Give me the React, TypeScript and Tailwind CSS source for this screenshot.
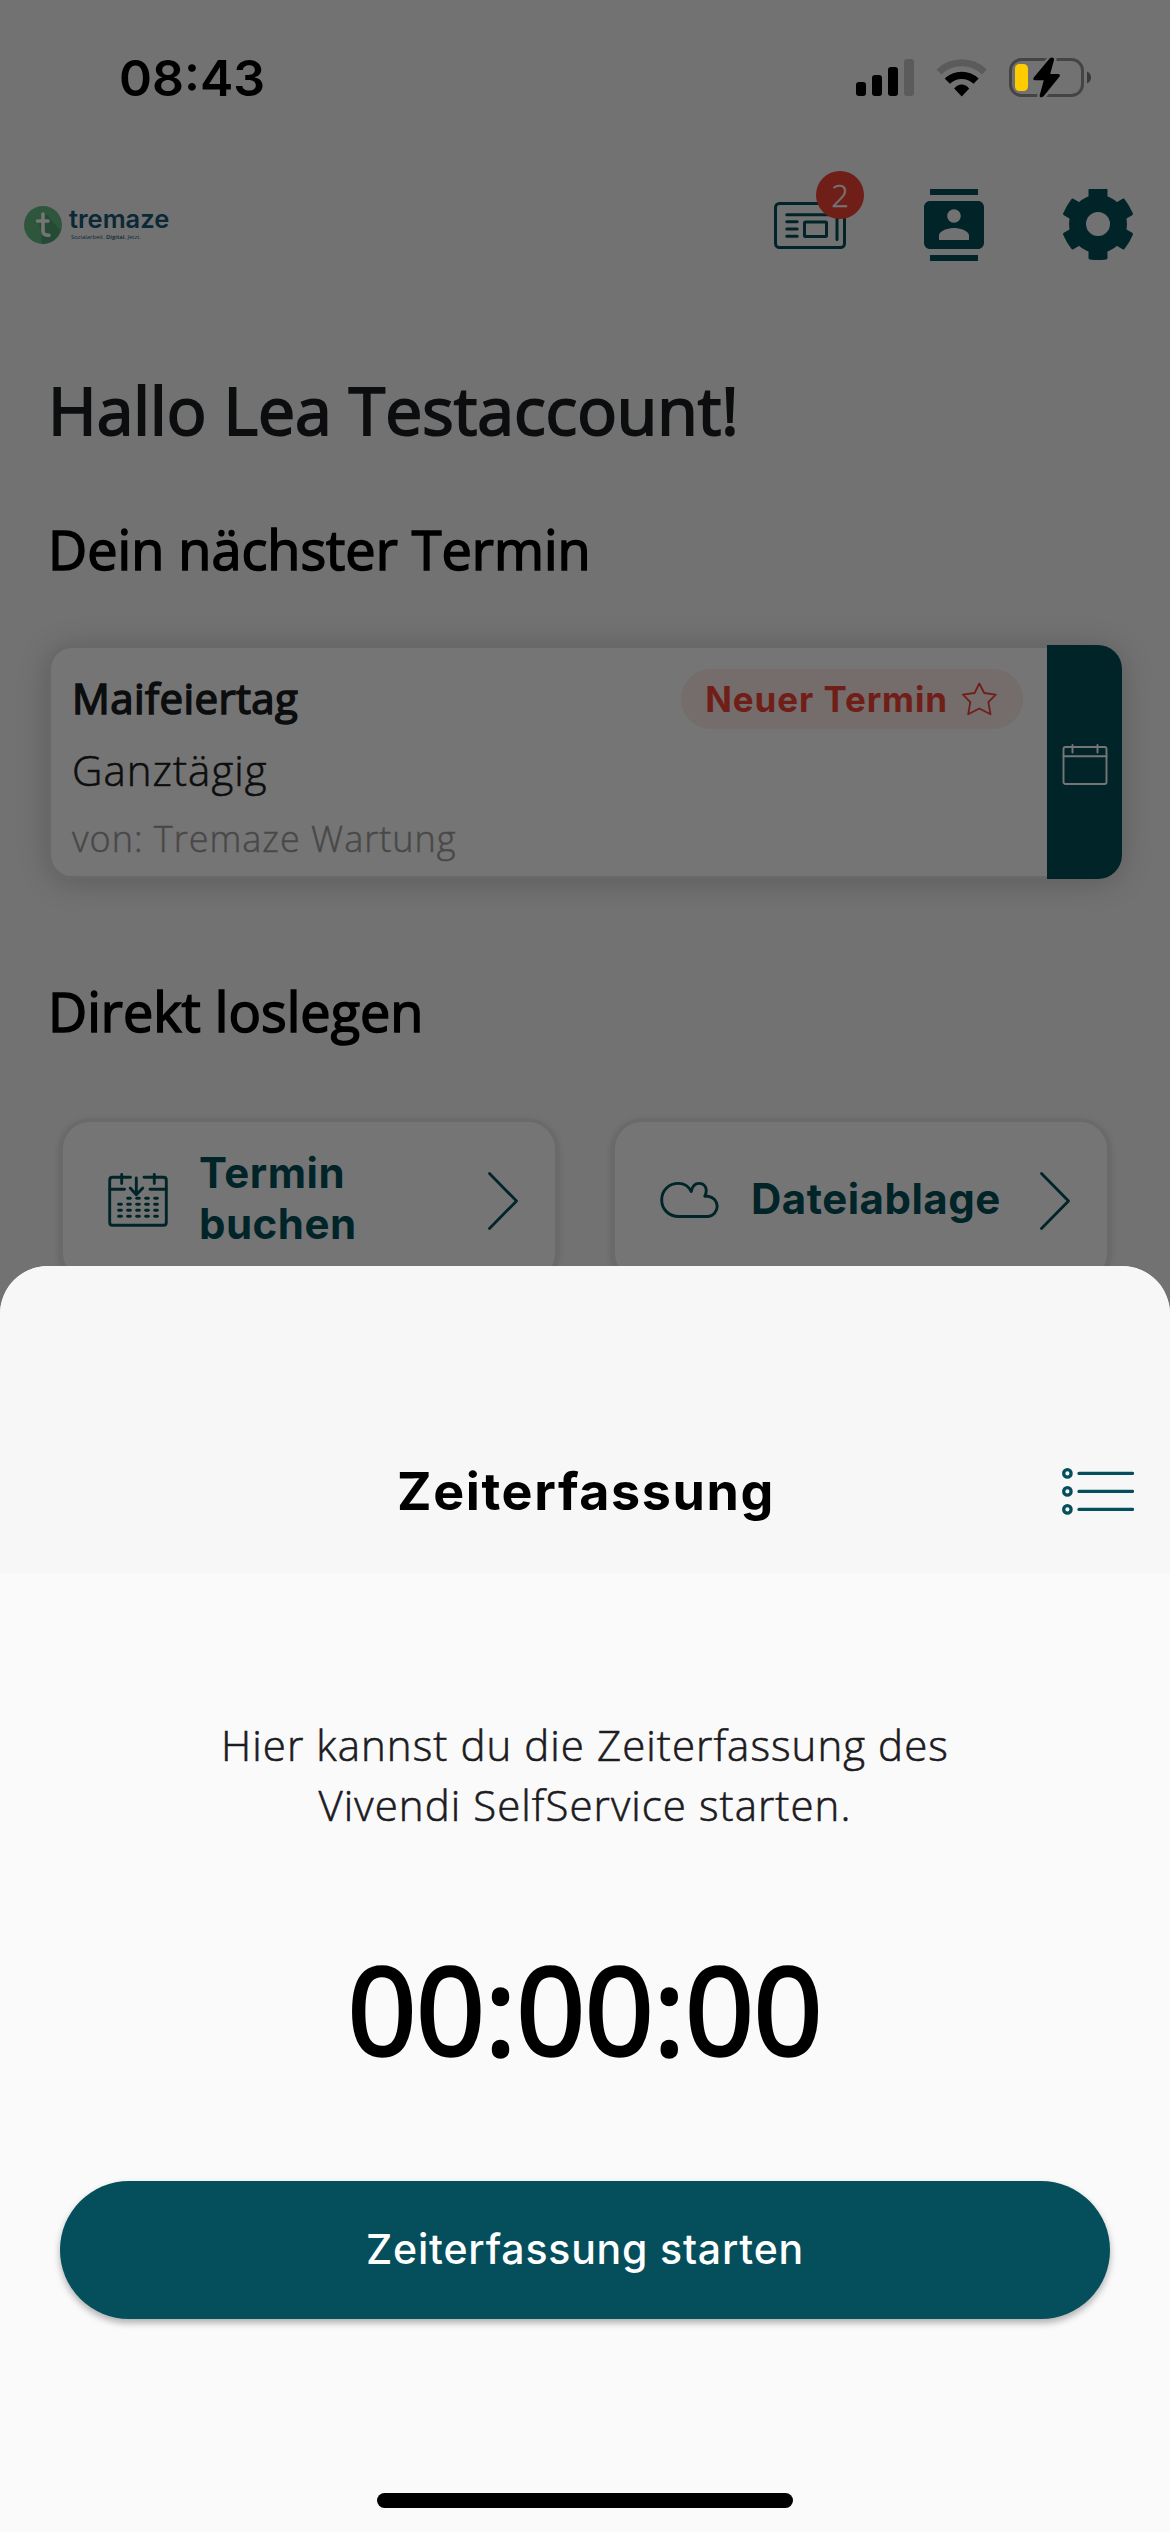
import type { ReactNode } from "react";

const TEAL = "#044f5b";

function SignalIcon() {
  return (
    <svg width="58" height="38" viewBox="0 0 58 38">
      <rect x="0" y="24" width="10" height="14" rx="3" />
      <rect x="16" y="17" width="10" height="21" rx="3" />
      <rect x="32" y="9" width="10" height="29" rx="3" />
      <rect x="48" y="1" width="10" height="37" rx="3" opacity="0.2" />
    </svg>
  );
}

function WifiIcon() {
  return (
    <svg width="52" height="40" viewBox="0 0 52 40" fill="none">
      <path d="M3 14A32.5 32.5 0 0 1 48.4 14" stroke="#000" strokeOpacity="0.2" strokeWidth="6.8" />
      <path d="M11.3 23.2A20.6 20.6 0 0 1 40.1 23.2" stroke="#000" strokeWidth="7.4" />
      <path d="M18.2 30.4C22.4 25.2 29 25.2 33.2 30.4L25.7 38.4Z" fill="#000" />
    </svg>
  );
}

function BatteryIcon() {
  const bolt = "M44.3 1.5Q46.4 1.6 46 4L42.2 18H50.6Q52.8 18.6 51.2 21L35.6 40.2Q33.6 42 32 41Q31.4 40.4 31.9 38.6L35.8 24.3H26.6Q24.4 23.6 25.8 21.6L41.6 2.6Q42.8 1.4 44.3 1.5Z";
  return (
    <svg width="84" height="43" viewBox="0 0 84 43">
      <rect x="2.5" y="3.5" width="72" height="36" rx="11" fill="none" stroke="#000" strokeOpacity="0.4" strokeWidth="3" />
      <rect x="7" y="8" width="13" height="27" rx="4.5" fill="#ffcc00" />
      <path d="M79 15.5C81.5 16.5 83 18.8 83 21.5S81.5 26.5 79 27.5Z" fill="#000" fillOpacity="0.5" />
      <path d={bolt} fill="#000" stroke="#727272" strokeWidth="5" />
      <path d={bolt} fill="#000" />
    </svg>
  );
}

function NewsIcon() {
  return (
    <svg width="72" height="72" viewBox="0 0 72 72" fill="none" stroke={TEAL} strokeWidth="3" strokeLinecap="round">
      <rect x="1.5" y="14.5" width="69" height="44" rx="4" />
      <path d="M12.8 25.7H60M12.8 32.8H23.2M12.8 40H23.2M12.8 47.3H23.2M63 24V50.5" />
      <rect x="30.5" y="33" width="22" height="14.5" rx="1" />
    </svg>
  );
}

function ContactsIcon() {
  return (
    <svg width="72" height="72" viewBox="0 0 24 24" fill={TEAL}>
      <path d="M20 0H4v2h16V0zM4 24h16v-2H4v2zM20 4H4c-1.1 0-2 .9-2 2v12c0 1.1.9 2 2 2h16c1.1 0 2-.9 2-2V6c0-1.1-.9-2-2-2zm-8 2.75c1.24 0 2.25 1.01 2.25 2.25s-1.01 2.25-2.25 2.25S9.75 10.24 9.75 9 10.76 6.75 12 6.75zM17 17H7v-1.5c0-1.67 3.33-2.5 5-2.5s5 .83 5 2.5V17z" />
    </svg>
  );
}

function GearIcon() {
  return (
    <svg width="72" height="72" viewBox="-36 -35 72 72" fill={TEAL}>
      <circle r="20.5" fill="none" stroke={TEAL} strokeWidth="17" />
      {[0, 60, 120, 180, 240, 300].map((a) => (
        <path key={a} transform={`rotate(${a})`} d="M-9.5 -22V-34Q-9.5 -35.3 -8.2 -35.5Q0 -36.5 8.2 -35.5Q9.5 -35.3 9.5 -34V-22Z" />
      ))}
    </svg>
  );
}

function StarIcon() {
  return (
    <svg width="35" height="34" viewBox="0 0 35 34" fill="none" stroke="#f44336" strokeWidth="1.8" strokeLinejoin="round">
      <path d="M17.3 1.5L22.2 11L33.8 12.7L26.4 20.2L28.5 32.3L17.3 26.5L6.2 32.3L8.3 20.2L1 12.7L12.6 11Z" />
    </svg>
  );
}

function CalendarIcon() {
  return (
    <svg width="46" height="42" viewBox="0 0 46 42" fill="none" stroke="#fff" strokeWidth="1.9" strokeLinecap="round">
      <rect x="1.5" y="3" width="43" height="37" rx="2" />
      <path d="M1.5 12.3H44.5M10.5 1V8.5M35.5 1V8.5" />
    </svg>
  );
}

function BookingIcon() {
  const rows = [27.3, 33.3, 39.3, 45.3];
  const cols = [12, 21, 30, 39, 48];
  return (
    <svg width="60" height="60" viewBox="0 0 60 60" fill="none" stroke={TEAL} strokeWidth="2.9" strokeLinecap="round" strokeLinejoin="round">
      <path d="M22.5 6.3H4.5Q1.7 6.3 1.7 9.3V51.5Q1.7 54.3 4.5 54.3H55.5Q58.3 54.3 58.3 51.5V9.3Q58.3 6.3 55.5 6.3H36" />
      <path d="M2 18.3H16.5M42 18.3H58M13.7 3.5V12.5M46.3 3.5V12.5M28.3 7V23.5M22.2 17L28.3 23.7L34.8 17" />
      {rows.map((y, r) =>
        cols.slice(r === 0 ? 1 : 0).map((x) => <path key={`${x}-${y}`} d={`M${x - 1.3} ${y}h2.6`} />),
      )}
    </svg>
  );
}

function CloudIcon() {
  return (
    <svg width="60" height="60" viewBox="0 0 60 60" fill="none" stroke={TEAL} strokeWidth="2.9" strokeLinejoin="round">
      <path d="M19 45.5C8.5 45.5 1.7 38 1.7 29C1.7 19 9 12.4 18.5 12.4C24.5 12.4 29 16 31.3 20.5C32.3 15.3 35 12.4 39 12.4C44.5 12.4 48.5 17.5 44.8 25.2H48A10.2 10.2 0 0 1 48 45.5Z" />
    </svg>
  );
}

function ChevronIcon() {
  return (
    <svg width="30" height="58" viewBox="0 0 30 58" fill="none" stroke={TEAL} strokeWidth="2.8" strokeLinecap="round" strokeLinejoin="round">
      <path d="M1.5 1.5L28.5 29L1.5 56.5" />
    </svg>
  );
}

function ListIcon() {
  return (
    <svg width="72" height="48" viewBox="0 0 72 48" fill="none" stroke={TEAL} strokeWidth="3.3" strokeLinecap="round">
      {[5.4, 23.4, 41.4].map((y) => (
        <g key={y}>
          <circle cx="5.4" cy={y} r="3.7" />
          <path d={`M17 ${y}H70.5`} />
        </g>
      ))}
    </svg>
  );
}

function Logo() {
  return (
    <div className="flex items-center gap-[7px]">
      <svg width="38" height="38" viewBox="0 0 38 38">
        <circle cx="19" cy="19" r="19" fill="#62bb85" />
        <path d="M22 8L36.5 24.5A19 19 0 0 1 17.5 38V28L15 17Z" fill="#52a274" />
        <path d="M19 8V25Q19 29.5 25 29.3M13.5 15H24" fill="none" stroke="#fff" strokeWidth="3.6" strokeLinecap="round" strokeLinejoin="round" />
      </svg>
      <div className="-mt-1 flex flex-col text-[#1a5878]">
        <span className="font-['Inter',sans-serif] text-[25.5px] leading-[28px] font-semibold">tremaze</span>
        <span className="pl-[2px] text-[5.9px] leading-[8px] whitespace-nowrap">
          Sozialarbeit. <b className="font-semibold">Digital.</b> Jetzt.
        </span>
      </div>
    </div>
  );
}

function QuickAction({ icon, children }: { icon: ReactNode; children: ReactNode }) {
  return (
    <div className="flex h-[164px] w-[498px] items-center rounded-[30px] border-[3px] border-[#e7e7e7] bg-white pr-[37px] pl-[45px] shadow-[0_2px_7px_rgba(0,0,0,0.16)]">
      {icon}
      <span className="-mt-[6px] ml-[31px] flex-1 font-['Inter',sans-serif] text-[42px] leading-[51px] font-bold tracking-[0.5px] text-[#044f5b]">
        {children}
      </span>
      <ChevronIcon />
    </div>
  );
}

function Dashboard() {
  return (
    <main className="isolate col-start-1 row-start-1 flex flex-col bg-[#f8f8f8] pt-[141px]">
      <header className="flex h-[168px] items-center justify-between pr-9 pl-6">
        <Logo />
        <nav className="flex items-center gap-[72px]">
          <div className="relative">
            <NewsIcon />
            <span className="absolute -top-[18px] left-[42px] flex size-12 items-center justify-center rounded-full bg-[#f44336] pt-px text-[31px] leading-none font-light text-white [-webkit-text-stroke:0.4px_#fff]">2</span>
          </div>
          <ContactsIcon />
          <GearIcon />
        </nav>
      </header>

      <h1 className="mt-[55px] pl-12 text-[66px] leading-[90px] text-[#1c1e22] [-webkit-text-stroke:2px_#1c1e22]">Hallo Lea Testaccount!</h1>
      <h2 className="mt-[58px] pl-12 text-[54px] leading-[74px] [-webkit-text-stroke:1.6px_#000]">Dein nächster Termin</h2>

      <section className="mt-[59px] ml-12 flex h-[234px] w-[1074px] rounded-[24px] shadow-[0_3px_32px_rgba(0,0,0,0.2)]">
        <div className="flex w-[999px] flex-col rounded-l-[24px] border-y-[3px] border-l-[3px] border-[#e2e2e2] bg-white pt-[21px] pr-6 pl-[21px]">
          <div className="flex items-start justify-between">
            <h3 className="text-[42px] leading-[58px] tracking-[0.4px] text-[#1c1e22] [-webkit-text-stroke:1.6px_#1c1e22]">Maifeiertag</h3>
            <div className="flex h-[60px] items-center gap-[14px] rounded-full bg-[#f44336]/10 pr-[26px] pl-6">
              <span className="-mt-px font-['Inter',sans-serif] text-[35px] leading-[60px] font-bold tracking-[0.9px] text-[#f44336]">Neuer Termin</span>
              <StarIcon />
            </div>
          </div>
          <p className="mt-[11px] text-[42px] leading-[60px] font-light tracking-[1.05px] text-[#1c1e22] [-webkit-text-stroke:0.6px_#1c1e22]">Ganztägig</p>
          <p className="mt-[14px] text-[36px] leading-[50px] font-light tracking-[1px] text-[#9e9e9e] [-webkit-text-stroke:0.5px_#9e9e9e]">von: Tremaze Wartung</p>
        </div>
        <div className="flex flex-1 items-center justify-center rounded-r-[24px] bg-[#044f5b] pt-[5px]">
          <CalendarIcon />
        </div>
      </section>

      <h2 className="mt-[95px] pl-12 text-[54px] leading-[74px] [-webkit-text-stroke:1.6px_#000]">Direkt loslegen</h2>
      <section className="mt-[71px] flex gap-[54px] pl-[60px]">
        <QuickAction icon={<BookingIcon />}>
          Termin
          <br />
          buchen
        </QuickAction>
        <QuickAction icon={<CloudIcon />}>Dateiablage</QuickAction>
      </section>
    </main>
  );
}

function StatusBar() {
  return (
    <div className="z-10 col-start-1 row-start-1 flex h-[141px] items-start justify-between pr-[78px] pl-[119px]">
      <span className="mt-12 font-['Inter',sans-serif] text-[50px] leading-[60px] font-semibold">08:43</span>
      <div className="mt-[56px] flex items-start">
        <div className="mt-[2px]">
          <SignalIcon />
        </div>
        <div className="mt-[2px] ml-[22px]">
          <WifiIcon />
        </div>
        <div className="ml-5">
          <BatteryIcon />
        </div>
      </div>
    </div>
  );
}

function TimeTrackingSheet() {
  return (
    <section className="z-10 col-start-1 row-start-1 mt-[1266px] flex h-[1266px] flex-col overflow-hidden rounded-t-[48px] bg-[#fafafa]">
      <header className="grid h-[308px] grid-cols-[1fr_auto_1fr] items-center bg-[#f7f7f7] px-9 pt-[144px]">
        <h2 className="col-start-2 pl-[2px] font-['Inter',sans-serif] text-[52px] leading-[62px] font-bold tracking-[1.6px]">Zeiterfassung</h2>
        <div className="flex justify-end">
          <ListIcon />
        </div>
      </header>
      <div className="flex flex-col items-center pt-[141px]">
        <p className="text-center text-[42px] leading-[60px] font-light tracking-[1.05px] text-[#1c1b1f] [-webkit-text-stroke:0.6px_#1c1b1f]">
          Hier kannst du die Zeiterfassung des
          <br />
          Vivendi SelfService starten.
        </p>
        <div className="mt-[94px] text-[120px] leading-[160px] [-webkit-text-stroke:3.5px_#000]">00:00:00</div>
        <button className="mt-[92px] h-[138px] w-[1050px] rounded-full bg-[#044f5b] font-['Inter',sans-serif] text-[41px] font-medium tracking-[0.8px] text-white shadow-[0_4px_7px_rgba(0,0,0,0.3)]">
          Zeiterfassung starten
        </button>
        <div className="mt-[174px] h-[15px] w-[416px] rounded-full bg-black" />
      </div>
    </section>
  );
}

export default function App() {
  return (
    <div className="grid h-[2532px] w-[1170px] overflow-hidden font-['Open_Sans',sans-serif] text-black">
      <Dashboard />
      <div className="z-[5] col-start-1 row-start-1 bg-black/54" />
      <StatusBar />
      <TimeTrackingSheet />
    </div>
  );
}
